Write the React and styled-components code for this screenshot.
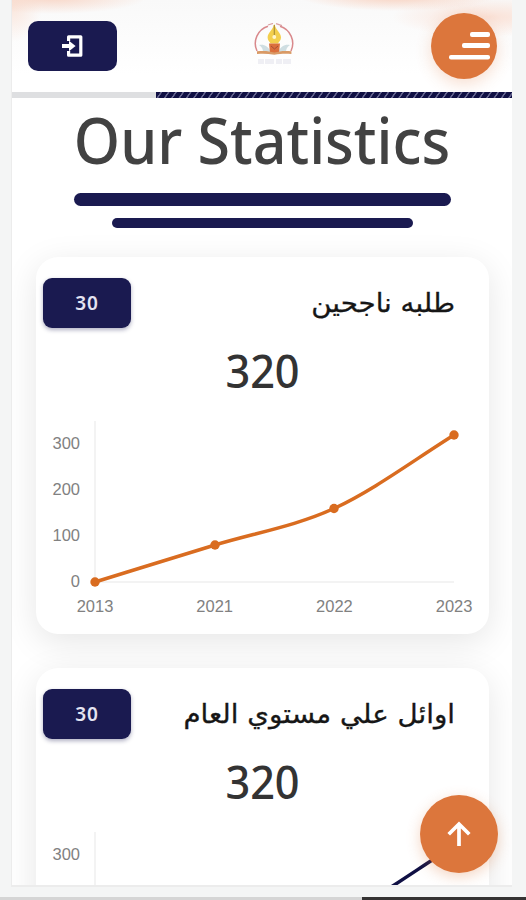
import React from "react";
import styled, { createGlobalStyle } from "styled-components";

const NAVY = "#1a1a50";
const ORANGE = "#dc763c";

const stats = [
  {
    id: 1,
    title: "طلبه ناجحين",
    count: 30,
    total: 320,
    color: "#d96c20",
    ticks: [300, 200, 100, 0],
    years: ["2013", "2021", "2022", "2023"],
  },
  {
    id: 2,
    title: "اوائل علي مستوي العام",
    count: 30,
    total: 320,
    color: "#101044",
    ticks: [300],
    years: [],
  },
];

function LoginIcon() {
  return (
    <svg width="24" height="24" viewBox="0 0 24 24" fill="none" stroke="#fff" strokeWidth="3.2">
      <path d="M7.600 7V2.800h12.200v18.400H7.600v-4.200" strokeLinejoin="round" />
      <path d="M1 12h8" strokeWidth="4" />
      <path d="M8 6.800l6.600 5.200L8 17.200z" fill="#fff" stroke="none" />
    </svg>
  );
}

function MenuIcon() {
  return (
    <svg width="42" height="29" viewBox="0 0 42 29" fill="#fff">
      <rect x="21" y="0" width="20" height="5" rx="2" />
      <rect x="13" y="11" width="28" height="5" rx="2" />
      <rect x="0" y="23" width="41" height="4.5" rx="2" />
    </svg>
  );
}

function Logo() {
  return (
    <svg width="41" height="46" viewBox="0 0 41 46">
      <path
        d="M3 28A18 18 0 0 1 14 3.2M26 3.2A18 18 0 0 1 37 28"
        fill="none"
        stroke="#d9898c"
        strokeWidth="1.5"
      />
      <path d="M14 2l5-1.6M22 .6l6 2" stroke="#d9a0a3" strokeWidth="1.2" />
      <path d="M5 22c5-1 9 1 12 7H9c0-3-1-5-4-7zM36 22c-5-1-9 1-12 7h8c0-3 1-5 4-7z" fill="#cfdee2" />
      <path d="M20.3 1c1.5 6 6.7 9 6.7 13.5 0 3-2.2 4.500-3 6h-7.400c-.8-1.500-3-3-3-6C13.600 10 18.800 7 20.300 1z" fill="#f3cf4d" />
      <path d="M20.300 2v10" stroke="#a78b36" strokeWidth="1.100" />
      <circle cx="20.300" cy="14" r="1.900" fill="#fff6ce" />
      <path d="M15 20.500h11L25 30h-9z" fill="#db6f3c" />
      <path d="M17 23l3.500 3 3.500-3" fill="none" stroke="#a94e37" />
      <path d="M3 28.300c6-.8 12-.5 17.400 1.200 5.400-1.700 11-2 17-1.200v2.600c-6-.5-11-.3-17 .8-6-1.100-11.400-1.300-17.400-.8z" fill="#d99a66" />
      <path d="M4 38.500h33" stroke="#efeff4" strokeWidth="5" strokeDasharray="6 1 9 2" />
    </svg>
  );
}

function ArrowIcon() {
  return (
    <svg width="24" height="26" viewBox="0 0 24 26" fill="none" stroke="#fff" strokeWidth="3.7">
      <path d="M12 25V3.500M1.700 13.300L12 3l10.300 10.300" />
    </svg>
  );
}

function LineChart({ color, ticks, years }) {
  return (
    <StChart width="453" height="222" viewBox="0 0 453 222">
      <path d="M59 10V171H418" fill="none" stroke="#f3f3f3" strokeWidth="2" />
      {ticks.map((tick, i) => (
        <text key={tick} x="44" y={38 + i * 46} textAnchor="end">
          {tick}
        </text>
      ))}
      {years.map((year, i) => (
        <text key={year} x={59 + i * 119.7} y="201" textAnchor="middle">
          {year}
        </text>
      ))}
      <path
        d="M59 171C99 158.700 139 146 179 134C219 122 260 115 298 97.500C338 79 378 49 418 24"
        fill="none"
        stroke={color}
        strokeWidth="3.500"
      />
      <g fill={color}>
        <circle cx="59" cy="171" r="4.700" />
        <circle cx="179" cy="134" r="4.700" />
        <circle cx="298" cy="97.500" r="4.700" />
        <circle cx="418" cy="24" r="4.700" />
      </g>
    </StChart>
  );
}

function StatCard({ stat }) {
  return (
    <StCard>
      <StCardTop>
        <StBadge>{stat.count}</StBadge>
        <StCardTitle>{stat.title}</StCardTitle>
      </StCardTop>
      <StTotal>{stat.total}</StTotal>
      <LineChart color={stat.color} ticks={stat.ticks} years={stat.years} />
    </StCard>
  );
}

function App() {
  return (
    <StPage>
      <GlobalStyle />
      <StScreen>
        <StHeader>
          <StLoginButton aria-label="login">
            <LoginIcon />
          </StLoginButton>
          <Logo />
          <StMenuButton aria-label="menu">
            <MenuIcon />
          </StMenuButton>
        </StHeader>
        <StProgress>
          <StProgressFill />
        </StProgress>
        <StTitle>Our Statistics</StTitle>
        <StLines>
          <StLine $width={377} $height={13} />
          <StLine $width={301} $height={10} />
        </StLines>
        <StCards>
          {stats.map((stat) => (
            <StatCard key={stat.id} stat={stat} />
          ))}
        </StCards>
        <StTopButton aria-label="scroll to top">
          <ArrowIcon />
        </StTopButton>
      </StScreen>
      <StBottomBar />
    </StPage>
  );
}

export default App;

const GlobalStyle = createGlobalStyle`
  * {
    box-sizing: border-box;
  }
  body {
    margin: 0;
    background-color: #f4f5f5;
    font-family: "Noto Sans", "DejaVu Sans", sans-serif;
  }
`;

const StPage = styled.div`
  display: flex;
  flex-direction: column;
  justify-content: space-between;
  width: 526px;
  height: 900px;
  overflow: hidden;
`;

const StScreen = styled.main`
  position: relative;
  width: 501px;
  height: 887px;
  margin-left: 11px;
  overflow: hidden;
  border: solid #ececec;
  border-width: 0 0 2px 1px;
  background: radial-gradient(ellipse 95px 17px at 40px -3px, #f8d5c5, transparent),
    radial-gradient(ellipse 30px 36px at 0 6px, #fae6dc, transparent),
    radial-gradient(ellipse 100px 16px at 385px -5px, #f8cdb9, transparent),
    radial-gradient(ellipse 95px 20px at 475px 17px, #fae1d6, transparent),
    linear-gradient(#f9f9f9, #fff 75px);
`;

const StHeader = styled.header`
  display: flex;
  align-items: center;
  justify-content: space-between;
  height: 92px;
  padding: 0 15px 0 16px;
`;

const StLoginButton = styled.button`
  display: flex;
  align-items: center;
  justify-content: center;
  width: 89px;
  height: 50px;
  border: none;
  border-radius: 10px;
  background-color: ${NAVY};
`;

const StMenuButton = styled.button`
  display: flex;
  align-items: center;
  justify-content: flex-end;
  width: 66px;
  height: 66px;
  padding: 0 6px 0 0;
  border: none;
  border-radius: 50%;
  background-color: ${ORANGE};
  box-shadow: 0 5px 16px rgba(220, 118, 60, 0.24);
`;

const StProgress = styled.div`
  display: flex;
  justify-content: flex-end;
  height: 6px;
  background-color: #dedfe1;
`;

const StProgressFill = styled.div`
  width: 356px;
  background: repeating-linear-gradient(125deg, #101044 0 3.500px, #65658f 4px 5px, #101044 5.500px 6px);
`;

const StTitle = styled.h1`
  height: 95px;
  margin: 0;
  color: #424242;
  font-size: 63px;
  font-weight: 500;
  line-height: 84px;
  text-align: center;
  white-space: nowrap;
  transform: scaleX(0.938);
`;

const StLines = styled.div`
  display: flex;
  flex-direction: column;
  align-items: center;
  gap: 12px;
`;

const StLine = styled.div`
  width: ${(props) => props.$width}px;
  height: ${(props) => props.$height}px;
  border-radius: 8px;
  background-color: ${NAVY};
`;

const StCards = styled.section`
  display: flex;
  flex-direction: column;
  gap: 34px;
  padding: 29px 23px 0 24px;
`;

const StCard = styled.article`
  height: 377px;
  padding-top: 21px;
  border-radius: 22px;
  background-color: #fff;
  box-shadow: 0 8px 34px rgba(0, 0, 0, 0.1);
`;

const StCardTop = styled.div`
  display: flex;
  align-items: center;
  justify-content: space-between;
  padding: 0 34px 0 7px;
`;

const StBadge = styled.div`
  width: 88px;
  height: 50px;
  border-radius: 9px;
  background-color: ${NAVY};
  box-shadow: 0 2px 4px rgba(26, 26, 80, 0.35);
  color: #e4e4f2;
  font-size: 19px;
  font-weight: 600;
  letter-spacing: 1px;
  line-height: 50px;
  text-align: center;
`;

const StCardTitle = styled.h2`
  margin: 0;
  direction: rtl;
  color: #161616;
  font-family: "DejaVu Sans", sans-serif;
  font-size: 26px;
  font-weight: 400;
  line-height: 50px;
  white-space: nowrap;
  transform: scaleX(1.065);
  transform-origin: right;
  -webkit-text-stroke: 0.3px #161616;
`;

const StTotal = styled.div`
  height: 83px;
  color: #333;
  font-size: 46px;
  font-weight: 500;
  line-height: 84px;
  text-align: center;
  transform: scaleX(0.94);
`;

const StChart = styled.svg`
  display: block;
  text {
    fill: #818181;
    font-family: "Liberation Sans", Arial, sans-serif;
    font-size: 16.500px;
  }
`;

const StTopButton = styled.button`
  position: absolute;
  right: 14px;
  bottom: 12px;
  display: flex;
  align-items: center;
  justify-content: center;
  width: 78px;
  height: 78px;
  border: none;
  border-radius: 50%;
  background-color: ${ORANGE};
  box-shadow: 0 4px 14px rgba(220, 118, 60, 0.3);
`;

const StBottomBar = styled.div`
  height: 3px;
  background: linear-gradient(90deg, #d5d5d5 362px, #353333 362px);
`;
